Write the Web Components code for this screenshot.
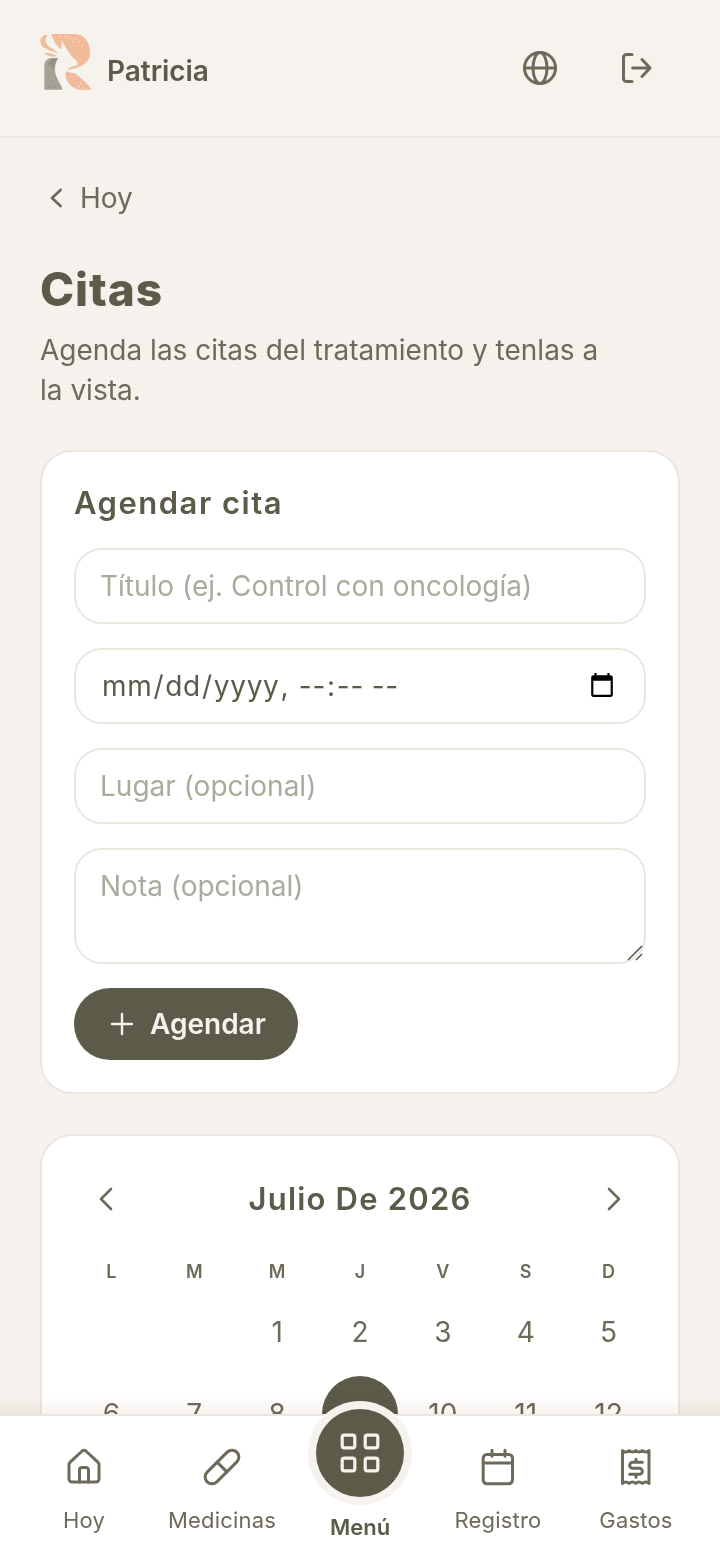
<!DOCTYPE html>
<html lang="es">
<head>
<meta charset="utf-8">
<title>Citas</title>
<style>
    html, body{ margin:0; height:100%; overflow:hidden; }
    body{ font-family:"Inter","Liberation Sans",sans-serif; color:#5c5a48; background:#f6f3ee; }
</style>
</head>
<body>
<app-shell>
    <top-bar slot="top" name="Patricia"></top-bar>
    <back-link>Hoy</back-link>
    <page-title heading="Citas">Agenda las citas del tratamiento y tenlas a la vista.</page-title>
    <appointment-form></appointment-form>
    <month-calendar></month-calendar>
    <bottom-nav slot="bottom"></bottom-nav>
</app-shell>

<script>
const HEAD_FONT = `"Inter","Liberation Sans",sans-serif`;
const ICONS = {
    home:`<path d="M3 10.600c0-.6.3-1.100.7-1.500l7.200-6.700a1.700 1.700 0 0 1 2.200 0l7.200 6.700c.4.4.7.9.7 1.500v8.600a1.800 1.800 0 0 1-1.800 1.800H4.800A1.800 1.800 0 0 1 3 19.200z"/><path d="M9.300 21v-7.200a1.500 1.500 0 0 1 1.500-1.500h2.400a1.500 1.500 0 0 1 1.500 1.500V21"/>`,
    pill:`<rect x="-.6" y="7.900" width="25.200" height="8.200" rx="4.100" transform="rotate(-45 12 12)"/><path d="M9.100 9.100l5.800 5.800"/>`,
    calendar:`<rect x="3.100" y="4.500" width="17.600" height="17.500" rx="2.200"/><path d="M3.100 9.600h17.600M8.400 2v3.600M16.200 2v3.600"/>`,
    receipt:`<path d="M3.900 2.100c1.300 1.200 2.680 1.200 3.975 0 1.300 1.200 2.680 1.200 3.975 0 1.300 1.200 2.680 1.200 3.975 0 1.300 1.200 2.680 1.200 3.975 0v19.800c-1.300-1.200-2.680-1.200-3.975 0-1.300-1.200-2.680-1.200-3.975 0-1.300-1.200-2.680-1.200-3.975 0-1.300-1.200-2.680-1.200-3.975 0z"/><path d="M15.800 9.200H10a1.800 1.800 0 0 0 0 3.600h4a1.800 1.800 0 0 1 0 3.600H8.200M12 7.400v1.800M12 16.400v1.800"/>`,
    grid:`<rect x="3.100" y="3.100" width="6.300" height="6.300" rx="1"/><rect x="14.600" y="3.100" width="6.300" height="6.300" rx="1"/><rect x="3.100" y="14.600" width="6.300" height="6.300" rx="1"/><rect x="14.600" y="14.600" width="6.300" height="6.300" rx="1"/>`
};

class AppShell extends HTMLElement{
    constructor(){
        super();
        this.attachShadow({mode:"open"});
        this.shadowRoot.innerHTML = `
        <style>
            :host{ display:flex; flex-direction:column; height:1560px; overflow:hidden; }
            main{
                flex:1; min-height:0; overflow:hidden; box-sizing:border-box; position:relative;
                padding:0 40px;
                background-image:radial-gradient(rgba(92,90,72,.018) 1px,transparent 1px);
                background-size:4px 4px;
            }
            main::after{
                content:""; position:absolute; left:0; right:0; bottom:0; height:18px; mix-blend-mode:multiply;
                background:linear-gradient(rgba(240,235,228,0),rgba(240,235,228,.6));
            }
            .stack{ display:flex; flex-direction:column; }
        </style>
        <slot name="top"></slot>
        <main><div class="stack"><slot></slot></div></main>
        <slot name="bottom"></slot>`;
    }
}

class TopBar extends HTMLElement{
    constructor(){
        super();
        this.attachShadow({mode:"open"});
        this.shadowRoot.innerHTML = `
        <style>
            :host{
                display:flex; align-items:center; box-sizing:border-box; height:138px;
                padding:0 64px 0 40px; border-bottom:2px solid #ebe6de; background:#f6f3ee;
            }
            .brand{ display:flex; align-items:center; gap:15px; flex:1; }
            .logo{ width:52px; height:56px; display:block; margin-top:-12px; }
            .name{ font-size:28px; font-weight:600; color:#5c5a48; position:relative; top:3px; letter-spacing:-.05px; }
            .actions{ display:flex; gap:56px; align-items:center; }
            svg.ic{ display:block; fill:none; stroke:#6e6a59; stroke-width:1.800; stroke-linecap:round; stroke-linejoin:round; }
        </style>
        <div class="brand">
            <svg class="logo" viewBox="60 42 156 168" aria-hidden="true">
                <path fill="#f2bb9b" d="M93 42H165C195 42 211 70 210 100C209 125 190 140 160 146C148 149 138 150 139 154C142 158 165 158 172 165C190 180 205 195 216 209H178C155 205 137 185 137 165C137 150 150 140 165 138C178 135 172 125 165 118C152 108 146 96 124 60C125 72 126 80 124 88C110 80 100 62 93 42Z"/>
                <path fill="#f2bb9b" d="M78 44C66 46 58 58 62 70C66 85 88 92 115 100C100 85 84 82 78 68C75 58 78 50 84 46Z"/>
                <path fill="#f2bb9b" d="M72 98C85 98 100 100 112 108C100 112 82 110 72 98Z"/>
                <path fill="#a5a296" d="M115 114H95C80 114 73 125 73 140V209H128C122 190 105 170 105 150C105 135 108 125 115 114Z"/>
                <path fill="none" stroke="#6e6a59" stroke-width="2" d="M85 134C88 126 94 120 102 117M91 140C93 130 98 124 106 118M97 146C98 136 102 128 110 118"/>
                <g fill="#fff"><circle cx="118" cy="50" r="1.800"/><circle cx="136" cy="50" r="1.800"/><circle cx="150" cy="54" r="1.800"/><circle cx="166" cy="56" r="1.800"/><circle cx="178" cy="64" r="1.800"/><circle cx="160" cy="66" r="1.800"/><circle cx="186" cy="78" r="1.800"/><circle cx="176" cy="200" r="1.800"/><circle cx="190" cy="204" r="1.800"/><circle cx="182" cy="190" r="1.800"/></g>
                <g fill="#6e6a59"><circle cx="84" cy="170" r="1.500"/><circle cx="96" cy="185" r="1.500"/><circle cx="84" cy="198" r="1.500"/><circle cx="105" cy="200" r="1.500"/><circle cx="94" cy="203" r="1.500"/></g>
            </svg>
            <span class="name">${this.getAttribute("name")}</span>
        </div>
        <div class="actions">
            <svg class="ic" width="40" height="40" viewBox="0 0 24 24"><circle cx="12" cy="12" r="9.300"/><ellipse cx="12" cy="12" rx="4.200" ry="9.300"/><path d="M2.700 12h18.600"/></svg>
            <svg class="ic" width="40" height="40" viewBox="0 0 24 24"><path d="M9.600 3.900H6.300A1.800 1.800 0 0 0 4.500 5.700v12.600a1.800 1.800 0 0 0 1.800 1.800h3.300M10 12h10.400M15.600 6.900l4.800 5.100-4.800 5.100"/></svg>
        </div>`;
    }
}

class BackLink extends HTMLElement{
    constructor(){
        super();
        this.attachShadow({mode:"open"});
        this.shadowRoot.innerHTML = `
        <style>
            :host{ display:flex; align-items:center; gap:10px; margin-top:42px; padding-left:2px; height:36px;
                font-size:28px; color:#6e6a59; }
            svg{ fill:none; stroke:currentColor; stroke-width:2.800; stroke-linecap:round; stroke-linejoin:round; display:block; }
        </style>
        <svg width="28" height="28" viewBox="0 0 28 28"><path d="M18.500 6 10 14l8.500 8"/></svg>
        <span><slot></slot></span>`;
    }
}

class PageTitle extends HTMLElement{
    constructor(){
        super();
        this.attachShadow({mode:"open"});
        this.shadowRoot.innerHTML = `
        <style>
            :host{ display:block; margin-top:43px; }
            h1{ margin:0; font:800 46px/60px ${HEAD_FONT}; color:#5c5a48; letter-spacing:.9px; }
            p{ margin:0; margin-top:11px; font-size:28px; line-height:40px; color:#6e6a59; max-width:575px; }
        </style>
        <h1>${this.getAttribute("heading")}</h1>
        <p><slot></slot></p>`;
    }
}

class AppointmentForm extends HTMLElement{
    constructor(){
        super();
        this.attachShadow({mode:"open"});
        this.shadowRoot.innerHTML = `
        <style>
            :host{
                display:flex; flex-direction:column; margin-top:40px; box-sizing:border-box;
                background:#fff; border:2px solid #ebe6de; border-radius:32px; padding:31px 32px 32px;
            }
            h2{ margin:0 0 25px; font:600 31px/40px ${HEAD_FONT}; color:#5c5a48; letter-spacing:1.500px; }
            .fields{ display:flex; flex-direction:column; gap:24px; align-items:stretch; }
            .field{ position:relative; display:flex; }
            input,textarea{
                flex:1; min-width:0; box-sizing:border-box; height:76px; margin:0; padding:0 24px;
                border:2px solid #ebe6de; border-radius:28px; background:#fff; outline:none;
                font:400 28px "Inter","Liberation Sans",sans-serif; color:#5c5a48;
            }
            input[type="datetime-local"]{ letter-spacing:.7px; padding-left:25px; }
            textarea{ height:116px; padding:18px 24px; line-height:36px; resize:none; display:block; }
            ::placeholder{ color:#acaa9d; opacity:1; }
            input[type="datetime-local"]::-webkit-calendar-picker-indicator{
                width:28px; height:28px; padding:0; margin:0 4px 0 0; opacity:1;
            }
            .grip{ position:absolute; right:2px; bottom:2px; display:block; }
            button{
                align-self:flex-start; display:flex; align-items:center; gap:16px; height:72px; margin-top:24px;
                padding:0 32px 0 36px; border:0; border-radius:36px; background:#5c5a48; color:#f6f3ee;
                font:600 28px "Inter","Liberation Sans",sans-serif;
            }
            button svg{ display:block; fill:none; stroke:currentColor; stroke-width:2.400; stroke-linecap:round; }
        </style>
        <h2>Agendar cita</h2>
        <div class="fields">
            <div class="field"><input type="text" placeholder="Título (ej. Control con oncología)"></div>
            <div class="field"><input type="datetime-local"></div>
            <div class="field"><input type="text" placeholder="Lugar (opcional)"></div>
            <div class="field">
                <textarea placeholder="Nota (opcional)"></textarea>
                <svg class="grip" width="18" height="18" viewBox="0 0 18 18"><path d="M2 16 16 2M10 16l6-6" stroke="#55534a" stroke-width="1.500" fill="none"/></svg>
            </div>
        </div>
        <button type="button">
            <svg width="24" height="24" viewBox="0 0 24 24"><path d="M12 2v20M2 12h20"/></svg>
            Agendar
        </button>`;
    }
}

class MonthCalendar extends HTMLElement{
    constructor(){
        super();
        this.attachShadow({mode:"open"});
        const heads = ["L","M","M","J","V","S","D"].map(d=>`<span class="dow">${d}</span>`).join("");
        let days = `<span></span><span></span>`;
        for(let d=1;d<=12;d++){
            days += `<span class="day${d==9?" sel":""}">${d}</span>`;
        }
        this.shadowRoot.innerHTML = `
        <style>
            :host{
                display:block; margin-top:40px; box-sizing:border-box; background:#fff;
                border:2px solid #ebe6de; border-radius:32px; padding:33px 28px;
            }
            .head{ display:flex; align-items:center; justify-content:space-between; height:60px; padding:0 22px; }
            .head svg{ display:block; fill:none; stroke:#6e6a59; stroke-width:2.600; stroke-linecap:round; stroke-linejoin:round; }
            .title{ font:600 31px/40px ${HEAD_FONT}; color:#5c5a48; letter-spacing:1.200px; }
            .grid{ display:grid; grid-template-columns:repeat(7,1fr); justify-items:center; }
            .dow{ font-size:18px; font-weight:600; color:#6e6a59; line-height:24px; margin-top:31px; margin-bottom:10px; }
            .day{ width:76px; height:76px; display:flex; align-items:center; justify-content:center; font-size:28px; color:#6e6a59; margin-bottom:6px; border-radius:50%; }
            .sel{ background:#5c5a48; color:#f6f3ee; }
        </style>
        <div class="head">
            <svg width="28" height="28" viewBox="0 0 28 28"><path d="M19 4 9 14l10 10"/></svg>
            <span class="title">Julio De 2026</span>
            <svg width="28" height="28" viewBox="0 0 28 28"><path d="M9 4l10 10-10 10"/></svg>
        </div>
        <div class="grid">${heads}${days}</div>`;
    }
}

class BottomNav extends HTMLElement{
    constructor(){
        super();
        this.attachShadow({mode:"open"});
        const item = (icon,label)=>`
            <div class="item">
                <svg width="40" height="40" viewBox="0 0 24 24">${ICONS[icon]}</svg>
                <span>${label}</span>
            </div>`;
        this.shadowRoot.innerHTML = `
        <style>
            :host{
                display:block; position:relative; z-index:2; height:146px; box-sizing:border-box; flex:none;
                background:#fff; border-top:2px solid #ebe6de;
            }
            .row{ display:grid; grid-template-columns:repeat(5,138px); justify-content:center; height:100%; }
            .item{ display:flex; flex-direction:column; align-items:center; gap:20px; padding-top:31px; font-size:22px; color:#6e6a59; letter-spacing:.2px; }
            .item svg{ display:block; fill:none; stroke:#6e6a59; stroke-width:1.800; stroke-linecap:round; stroke-linejoin:round; overflow:visible; }
            .menu{ position:relative; font-weight:600; color:#5c5a48; padding-top:98px; letter-spacing:0; }
            .fab{
                position:absolute; left:50%; top:-7px; width:88px; height:88px; margin-left:-44px;
                border-radius:50%; background:#5c5a48; box-shadow:0 0 0 8px #f6f3ee;
                display:flex; align-items:center; justify-content:center;
            }
            .fab svg{ stroke:#f6f3ee; stroke-width:1.600; }
        </style>
        <div class="row">
            ${item("home","Hoy")}
            ${item("pill","Medicinas")}
            <div class="item menu">
                <div class="fab"><svg width="48" height="48" viewBox="0 0 24 24">${ICONS.grid}</svg></div>
                <span>Menú</span>
            </div>
            ${item("calendar","Registro")}
            ${item("receipt","Gastos")}
        </div>`;
    }
}

customElements.define("app-shell",AppShell);
customElements.define("top-bar",TopBar);
customElements.define("back-link",BackLink);
customElements.define("page-title",PageTitle);
customElements.define("appointment-form",AppointmentForm);
customElements.define("month-calendar",MonthCalendar);
customElements.define("bottom-nav",BottomNav);
</script>
</body>
</html>
